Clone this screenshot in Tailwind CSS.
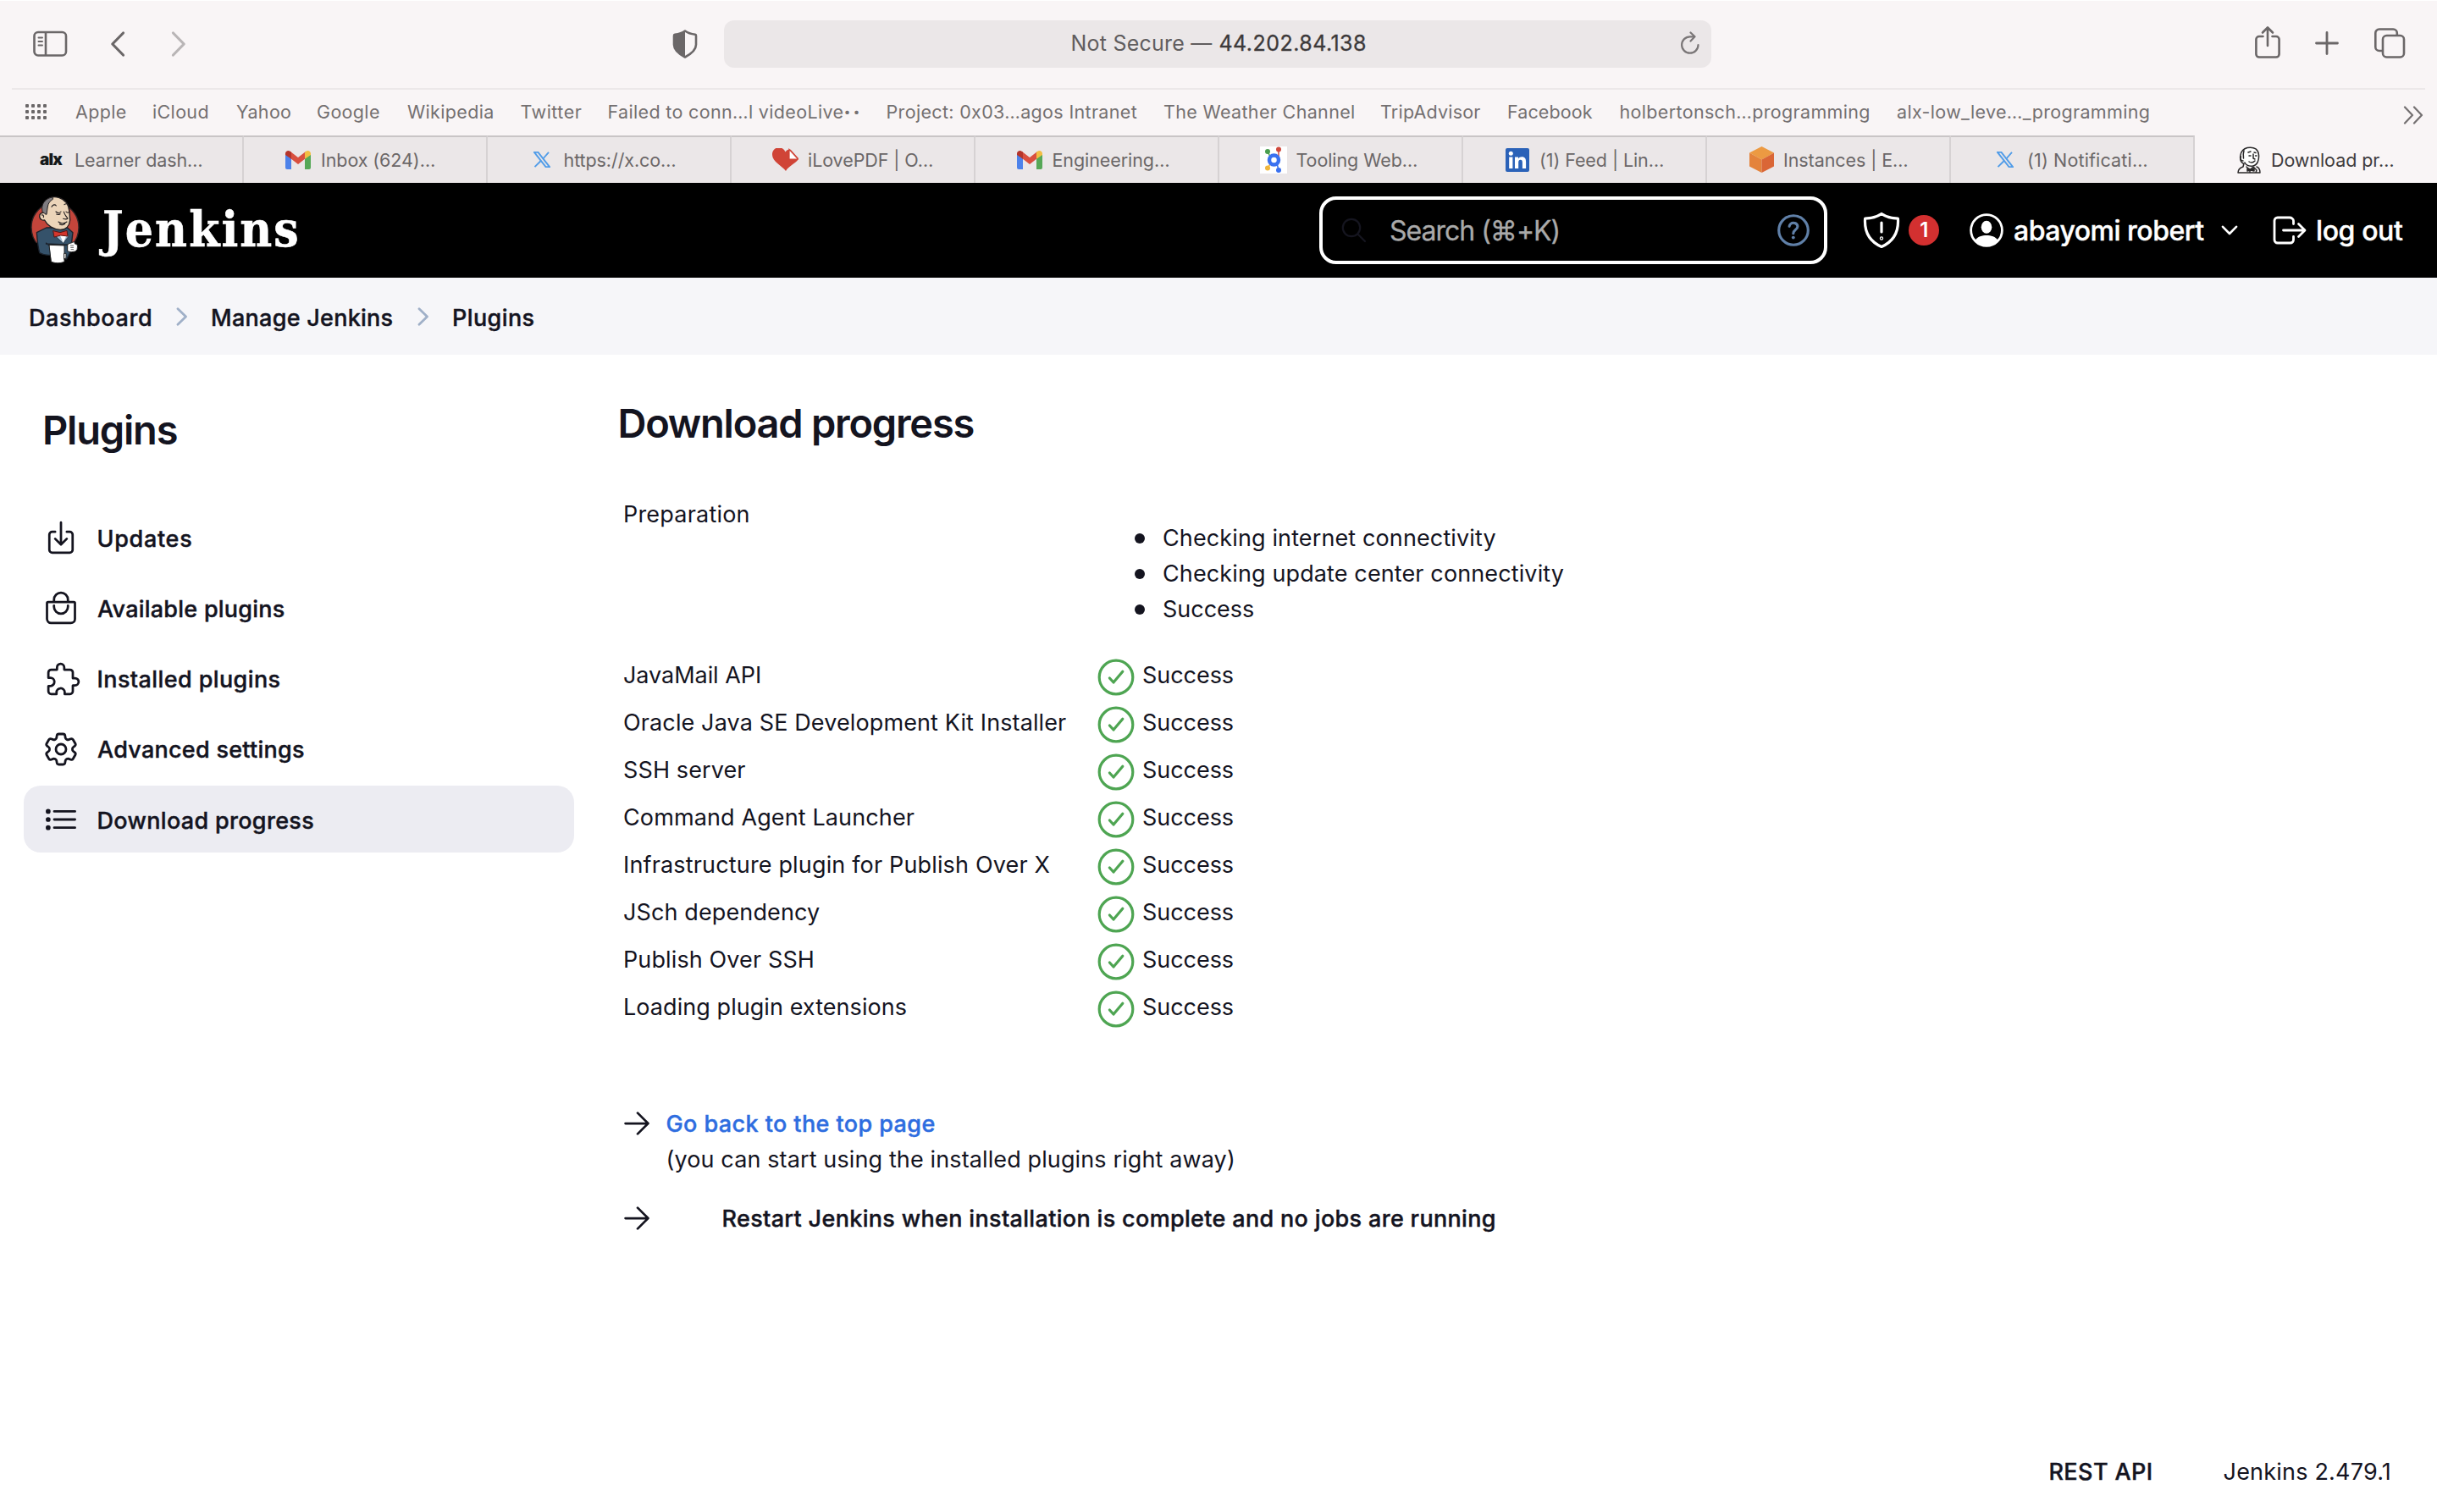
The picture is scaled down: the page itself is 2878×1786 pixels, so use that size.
<!DOCTYPE html>
<html lang="en">
<head>
<meta charset="utf-8">
<title>Download progress - Jenkins</title>
<script src="https://cdn.jsdelivr.net/npm/@tailwindcss/browser@4"></script>
</head>
<body class="w-[2878px] h-[1786px] overflow-hidden bg-white font-['Inter',sans-serif] text-[27px] leading-[42px] tracking-[0.12px] text-[#14141f] flex flex-col">

<svg class="hidden">
  <symbol id="ok" viewBox="-22 -22 44 44"><g fill="none" stroke="#4ea552" stroke-width="3.2" stroke-linecap="round" stroke-linejoin="round"><circle r="19.8"/><path d="M-7.6 1L-3 6 7.8-6.8"/></g></symbol>
  <symbol id="arrow" viewBox="0 0 512 512"><path fill="none" stroke="#14141f" stroke-width="32" stroke-linecap="round" stroke-linejoin="round" d="M268 112l144 144-144 144M392 256H100"/></symbol>
  <symbol id="gmail" viewBox="0 0 30 22"><path fill="#4d82ea" d="M0 4l7 5v13H2a2 2 0 0 1-2-2z"/><path fill="#56a857" d="M30 4l-7 5v13h5a2 2 0 0 0 2-2z"/><path fill="#d95040" d="M6 1l9 7 9-7v8l-9 7-9-7z"/><path fill="#b5352b" d="M0 3.500C0 .5 3.500-1 6 1l1 .8v8L0 5z"/><path fill="#f2be42" d="M30 3.500C30 .5 26.500-1 24 1l-1 .8v8L30 5z"/></symbol>
  <symbol id="x" viewBox="0 0 20 19"><g fill="none" stroke="#529de8" stroke-width="1.900"><path d="M1 .9h4.500L19 18.100h-4.500z"/><path d="M18 .8L11.300 8.500M8.700 11L1.500 18.200"/></g></symbol>
  <symbol id="crumb" viewBox="0 0 14 22"><path fill="none" stroke="#a0b0c8" stroke-width="2.800" stroke-linecap="round" stroke-linejoin="round" d="M2 1.800L11.500 11 2 20.200"/></symbol>
</svg>

<!-- Browser toolbar -->
<div class="h-[104px] shrink-0 bg-[#f9f5f6] border-t border-white flex items-center pb-[2px] text-[#6b6768]">
  <svg class="ml-[39px] w-[41px] h-[32px]" viewBox="0 0 41 32" fill="none" stroke="currentColor" stroke-width="2.600"><rect x="1.500" y="2" width="37.500" height="27.500" rx="4.500"/><path d="M15 2v27.500"/><path stroke-width="2" stroke-linecap="round" d="M6.500 8.500h4.500M6.500 13h4.500M6.500 17.500h4.500"/></svg>
  <svg class="ml-[49px] w-[20px] h-[32px]" viewBox="0 0 20 32" fill="none" stroke="currentColor" stroke-width="3.200" stroke-linecap="round" stroke-linejoin="round"><path d="M16.500 3L3.800 16l12.700 13"/></svg>
  <svg class="ml-[51px] w-[20px] h-[32px] text-[#b9b5b6]" viewBox="0 0 20 32" fill="none" stroke="currentColor" stroke-width="3.200" stroke-linecap="round" stroke-linejoin="round"><path d="M4.500 3L17.200 16 4.500 29"/></svg>
  <svg class="ml-[574px] w-[30px] h-[34px]" viewBox="0 0 30 34"><path fill="none" stroke="currentColor" stroke-width="2.600" stroke-linejoin="round" d="M15 1.500c3.500 2.600 7.500 3.700 12 4.300.8.100 1 .7 1 1.500v10.500c0 6.200-5 10.500-13 14.700-8-4.200-13-8.500-13-14.700V7.300c0-.8.200-1.400 1-1.500C7.500 5.200 11.500 4.100 15 1.500z"/><path fill="currentColor" d="M15 1.500c-3.500 2.600-7.500 3.700-12 4.300-.8.100-1 .7-1 1.500v10.500c0 6.200 5 10.500 13 14.700z"/></svg>
  <div class="ml-[31px] w-[1166px] h-[56px] mt-px rounded-[12px] bg-[#ebe7e8] flex items-center text-[25px] tracking-[0.22px]">
    <span class="ml-[409.500px] -mt-[2px] text-[#605d5e]">Not Secure —</span>
    <span class="ml-[8px] -mt-[2px] text-[#3c393a] tracking-[0.46px] [-webkit-text-stroke:0.300px_#3c393a]">44.202.84.138</span>
    <svg class="ml-auto mr-[13px] -mt-[2px] w-[24px] h-[28px]" viewBox="0 0 24 28" fill="none" stroke="#7a7677" stroke-width="2.200" stroke-linecap="round" stroke-linejoin="round"><path d="M21.500 16a9.700 9.700 0 1 1-9.700-9.700h4.700"/><path d="M12.500 1.500l5 4.800-5 5.200"/></svg>
  </div>
  <svg class="ml-[641px] -mt-[3px] w-[32px] h-[40px]" viewBox="0 0 32 40" fill="none" stroke="currentColor" stroke-width="2.600" stroke-linecap="round" stroke-linejoin="round"><path d="M10.500 13H6a3.600 3.600 0 0 0-3.600 3.600V34A3.600 3.600 0 0 0 6 37.500h20a3.600 3.600 0 0 0 3.600-3.500V16.600A3.600 3.600 0 0 0 26 13h-4.500M16 24V3M10 8.500L16 2.500l6 6"/></svg>
  <svg class="ml-[40px] -mt-px w-[28px] h-[28px]" viewBox="0 0 28 28" fill="none" stroke="currentColor" stroke-width="2.800" stroke-linecap="round"><path d="M14 1.500v25M1.500 14h25"/></svg>
  <svg class="ml-[41px] -mt-px w-[38px] h-[38px]" viewBox="0 0 38 38" fill="none" stroke="currentColor" stroke-width="2.600"><rect x="11" y="10" width="25" height="25.500" rx="4.500"/><path d="M10.500 28H6.800A4.500 4.500 0 0 1 2.300 23.500V7A4.500 4.500 0 0 1 6.800 2.500h16.500A4.500 4.500 0 0 1 27.800 7v2.500"/></svg>
</div>

<!-- Favourites bar -->
<div class="h-[56px] shrink-0 bg-[#f9f5f6] flex flex-col text-[#747071]">
  <div class="mx-[14px] h-[2px] bg-[#ece8e9]"></div>
  <div class="flex items-center h-[52px] text-[21.5px] tracking-[0.34px] whitespace-nowrap">
    <svg class="ml-[29px] w-[28px] h-[20px] mr-[32px]" viewBox="0 0 28 20" fill="#6b6768"><g id="dots"><rect x="1" y="1" width="4" height="4" rx="1"/><rect x="8" y="1" width="4" height="4" rx="1"/><rect x="15" y="1" width="4" height="4" rx="1"/><rect x="22" y="1" width="4" height="4" rx="1"/></g><use href="#dots" y="7"/><use href="#dots" y="14"/></svg>
    <span class="w-[91px] shrink-0">Apple</span>
    <span class="w-[99px] shrink-0">iCloud</span>
    <span class="w-[95px] shrink-0">Yahoo</span>
    <span class="w-[107px] shrink-0">Google</span>
    <span class="w-[133.500px] shrink-0">Wikipedia</span>
    <span class="w-[103px] shrink-0 tracking-[0.5px]">Twitter</span>
    <span class="w-[329px] shrink-0">Failed to conn…l videoLive<span class="font-black tracking-[3px]">··</span></span>
    <span class="w-[327.500px] shrink-0">Project: 0x03…agos Intranet</span>
    <span class="w-[256px] shrink-0">The Weather Channel</span>
    <span class="w-[150px] shrink-0 tracking-[0.2px]">TripAdvisor</span>
    <span class="w-[132.500px] shrink-0 tracking-[0.1px]">Facebook</span>
    <span class="w-[327.500px] shrink-0">holbertonsch…programming</span>
    <span>alx-low_leve…_programming</span>
    <svg class="ml-auto mr-[16px] mt-[8px] w-[24px] h-[22px]" viewBox="0 0 24 22" fill="none" stroke="currentColor" stroke-width="2.200" stroke-linecap="round" stroke-linejoin="round"><path d="M2 1.500L11 11l-9 9.500M13 1.500L22 11l-9 9.500"/></svg>
  </div>
</div>

<!-- Tabs -->
<div class="h-[56px] shrink-0 grid grid-cols-[repeat(9,288px)_286px] bg-[#ebe7e8] text-[21.5px] tracking-[-0.08px] text-[#6b6768] whitespace-nowrap *:flex *:items-center *:pb-px">
  <div class="border-t-2 border-r-2 border-t-[#c9c5c6] border-r-[#d6d2d3]"><span class="ml-[47px] w-[41px] font-black text-[19px] leading-none text-[#15191a] tracking-[-0.8px]">alx</span><span>Learner dash…</span></div>
  <div class="border-t-2 border-r-2 border-t-[#c9c5c6] border-r-[#d6d2d3]"><svg class="ml-[49px] w-[30px] h-[22px] mr-[12px]"><use href="#gmail"/></svg><span>Inbox (624)…</span></div>
  <div class="border-t-2 border-r-2 border-t-[#c9c5c6] border-r-[#d6d2d3]"><svg class="ml-[54px] w-[20px] h-[19px] mr-[15.500px]"><use href="#x"/></svg><span>https://x.co…</span></div>
  <div class="border-t-2 border-r-2 border-t-[#c9c5c6] border-r-[#d6d2d3]"><svg class="ml-[48px] w-[31px] h-[27px] mr-[11px]" viewBox="0 0 31 27"><path fill="#d04437" d="M16 27C12 21 0 16 0 8a8 8 0 0 1 15.500-3.500C17 2 20 1 22 2l9 10c0 4-12 9-15 15z"/><path fill="#fff" stroke="#d04437" stroke-width="1.200" d="M20 1.500V13h10.500z"/></svg><span>iLovePDF | O…</span></div>
  <div class="border-t-2 border-r-2 border-t-[#c9c5c6] border-r-[#d6d2d3]"><svg class="ml-[49px] w-[30px] h-[22px] mr-[11.500px]"><use href="#gmail"/></svg><span>Engineering…</span></div>
  <div class="border-t-2 border-r-2 border-t-[#c9c5c6] border-r-[#d6d2d3]"><svg class="ml-[48px] w-[32px] h-[32px] mr-[10.500px]" viewBox="0 0 32 32"><path fill="#fff" d="M0 0h32v32H0z"/><g stroke-width="1.500"><path stroke="#4a9e4f" d="M9 6l3 6"/><path stroke="#d0483c" d="M22 4v8"/><path stroke="#efb73e" d="M9 25l4-5"/><path stroke="#3a71f0" d="M22 28l-2-8"/></g><circle cx="16.500" cy="16" r="5.500" fill="none" stroke="#3a71f0" stroke-width="4.500"/><circle cx="9" cy="6" r="3" fill="#4a9e4f"/><circle cx="22" cy="3.500" r="3" fill="#d0483c"/><circle cx="9" cy="25.500" r="3" fill="#efb73e"/><circle cx="22" cy="28" r="3" fill="#3a71f0"/></svg><span>Tooling Web…</span></div>
  <div class="border-t-2 border-r-2 border-t-[#c9c5c6] border-r-[#d6d2d3]"><svg class="ml-[50px] w-[28px] h-[28px] mr-[12px]" viewBox="0 0 28 28"><rect width="28" height="28" rx="2" fill="#2b62b8"/><g fill="#fff"><circle cx="6.300" cy="6.300" r="2.500"/><path d="M4.200 10.500h4.200V24H4.200zM11 10.500h4v1.900c.8-1.400 2.400-2.200 4.200-2.200 3.900 0 4.900 2.500 4.900 6V24h-4.200v-6.900c0-1.700-.3-3.400-2.300-3.400s-2.400 1.600-2.400 3.300v7H11z"/></g></svg><span>(1) Feed | Lin…</span></div>
  <div class="border-t-2 border-r-2 border-t-[#c9c5c6] border-r-[#d6d2d3]"><svg class="ml-[50px] w-[29px] h-[31px] mr-[11px]" viewBox="0 0 29 31"><path fill="#ec9a42" d="M14.500 0L29 7.500 14.500 15.500 0 7.500z"/><path fill="#e4833b" d="M0 7.500l14.500 8V31L0 23.500z"/><path fill="#da6636" d="M29 7.500l-14.500 8V31L29 23.500z"/></svg><span>Instances | E…</span></div>
  <div class="border-t-2 border-r-2 border-t-[#c9c5c6] border-r-[#d6d2d3]"><svg class="ml-[54px] w-[20px] h-[19px] mr-[16px]"><use href="#x"/></svg><span class="tracking-[0.15px]">(1) Notificati…</span></div>
  <div class="bg-[#f9f5f6] border-t-2 border-[#f9f5f6] text-[#3f3c3d]"><svg class="ml-[49px] w-[30px] h-[32px] mr-[11px]" viewBox="0 0 30 32" fill="none" stroke="#2a2829" stroke-width="1.500" stroke-linecap="round" stroke-linejoin="round"><path fill="#fff" d="M8 20C3 17 3 4 13 1.500 22 0 26 4 26.500 10c.5 6-1.500 12-7 13-4 .5-8-1-9.500-4"/><path d="M9 5c-1 3-1 6-.5 9M5.500 12c-1.500 2 0 5 2.500 5M14 7l3-1M21 7l2 .5M20 9v5l2 1M15 11h2M22.500 11H24M15 18c3 2 5 1 7-1M9 20l-1 4c-3 1-6 3-6 7h26c0-3-1-6-4-7M12 24l4 4 4-4M16 28v3M20 24l4 4-1 3"/><path fill="#2a2829" d="M13 26l4 1 4-1v3l-4-1-4 1z"/></svg><span>Download pr…</span></div>
</div>

<!-- Jenkins header -->
<header class="h-[112px] shrink-0 bg-black text-white flex items-center text-[32px] tracking-[-0.55px]">
  <svg class="ml-[24px] w-[100px] h-[100px]" viewBox="0 0 300 300" stroke-linejoin="round" stroke-linecap="round">
    <ellipse cx="123" cy="140" rx="84" ry="88" fill="#c3453b" stroke="#2b2223" stroke-width="4"/>
    <path fill="#000" d="M40 196h30l34 70H50zM206 190l-46 60h60z"/>
    <path fill="#35526a" stroke="#1b222b" stroke-width="4" d="M92 141L58 158c2 28 4 50 10 72 10 6 24 9 38 8l58 14 14-26 8-68-20-18z"/>
    <path fill="#9bb8d0" stroke="#1b222b" stroke-width="2" d="M126 172l26 24 20-26-16-12z"/>
    <path fill="#fff" d="M140 166l12 28 12-26z"/>
    <path fill="#ecd5b9" stroke="#221e1f" stroke-width="4" d="M84 60c6-24 30-32 52-26 26 8 36 26 38 50l2 30c-2 20-14 34-34 34-24 0-46-14-56-34-8 2-16-2-18-12-1-8 6-15 14-14z"/>
    <path fill="#7f7c80" stroke="#221e1f" stroke-width="3" d="M112 33C92 36 78 52 77 70c0 8 1 14 2 18 4-1 7 0 8 4l6 2 4-28c2-12 8-20 18-26z"/>
    <path fill="none" stroke="#221e1f" stroke-width="3.400" d="M111 67c4-8 12-10 16-4M156 59c6-5 12-3 14 2M126 84c6 6 13 6 18 0M162 84c4 5 9 4 12 0M128 93c5 2 10 1 13-1M154 84c2 10 8 16 14 24-4 4-10 3-16 1M135 120c10 7 20 7 30 0M139 128c7 4 14 3 19-1M76 96c4-2 8 2 6 8"/>
    <path fill="#d3362d" stroke="#5c1512" stroke-width="3" d="M117 152l24 6 24-7 3 20-25-3-22 6z"/>
    <path fill="none" stroke="#1b222b" stroke-width="5" d="M92 198l80 4M92 196l12 8"/>
    <path fill="#fff" stroke="#222" stroke-width="3" d="M103 202l53 2v58c-16 6-34 5-46 0z"/>
    <path fill="#fff" stroke="#222" stroke-width="3" d="M168 200c4-5 14-4 18-8 6-2 8 2 7 6 8 0 11 6 9 14 1 8-6 14-14 14-8 2-14 1-20-2zM156 232h6v16l-6 4z"/>
    <path stroke="#444" stroke-width="2.500" fill="none" d="M178 204h10M179 211h9M180 218h8"/>
  </svg>
  <span class="ml-[-3px] w-[256px] font-['DejaVu_Serif_Condensed','DejaVu_Serif',serif] font-bold text-[58px] tracking-[2.100px] leading-none -mt-[2px] [-webkit-text-stroke:0.600px_white]">Jenkins</span>
  <div class="ml-[1181px] w-[600px] h-[80px] shrink-0 rounded-[20px] border-4 border-white flex items-center text-[#a9a9a9]">
    <svg class="ml-[22px] w-[30px] h-[30px]" viewBox="0 0 30 30" fill="none" stroke="#15151f" stroke-width="2.200" stroke-linecap="round"><circle cx="12" cy="12" r="10.200"/><path d="M19.500 19.500L28 28"/></svg>
    <span class="ml-[27px] mt-[2px] tracking-[-1px] [-webkit-text-stroke:0.300px_#a9a9a9]">Search (⌘+K)</span>
    <svg class="ml-auto mr-[11px] w-[50px] h-[50px]" viewBox="0 0 512 512" fill="none" stroke="#6080a8" stroke-width="32" stroke-linecap="round"><circle cx="256" cy="256" r="177"/><path d="M206 208s.8-16 17-30c10-8 22-11 32-11 11 0 20 2 25 4.500 9 4.500 26 15 26 38 0 24-15 34-31 46s-21 24-21 38"/><circle cx="254" cy="344" r="20" fill="#6080a8" stroke="none"/></svg>
  </div>
  <svg class="ml-[42px] w-[44px] h-[44px]" viewBox="0 0 44 44" fill="none" stroke="#fff" stroke-width="3.200" stroke-linecap="round" stroke-linejoin="round"><path d="M22 2.500C17 6 11 8 2.600 8.200 1.500 24 7.500 35 22 41.500 36.500 35 42.500 24 41.400 8.200 33 8 27 6 22 2.500z"/><path d="M22 13v11"/><circle cx="22" cy="31.500" r=".6"/></svg>
  <span class="ml-[10px] size-[36px] rounded-full bg-[#d33030] flex items-center justify-center text-[24px] font-semibold leading-none">1</span>
  <svg class="ml-[35px] w-[42px] h-[42px]" viewBox="-21 -21 42 42"><clipPath id="c"><circle r="18.500"/></clipPath><circle r="18.400" fill="none" stroke="#fff" stroke-width="2.800"/><ellipse cy="-3.700" rx="6.300" ry="7.500" fill="#fff"/><path clip-path="url(#c)" fill="#fff" d="M-13.500 12C-11 7.500-5 6 0 6s11 1.500 13.500 6L9 20H-9z"/></svg>
  <span class="ml-[11px] mt-[2px] w-[226px] shrink-0 font-medium tracking-[-0.5px] whitespace-nowrap [-webkit-text-stroke:0.400px_white]">abayomi robert</span>
  <svg class="ml-[19px] w-[20px] h-[12px]" viewBox="0 0 20 12" fill="none" stroke="#fff" stroke-width="2.600" stroke-linecap="round" stroke-linejoin="round"><path d="M2 1.800l8 8.200 8-8.200"/></svg>
  <svg class="ml-[37px] w-[48px] h-[48px]" viewBox="0 0 512 512" fill="none" stroke="#fff" stroke-width="30" stroke-linecap="round" stroke-linejoin="round"><path d="M304 336v40a40 40 0 01-40 40H104a40 40 0 01-40-40V136a40 40 0 0140-40h152c22.090 0 48 17.910 48 40v40M368 336l80-80-80-80M176 256h256"/></svg>
  <span class="ml-[7px] mt-[2px] font-medium tracking-[-0.4px] [-webkit-text-stroke:0.400px_white]">log out</span>
</header>

<!-- Breadcrumbs -->
<nav class="h-[91px] shrink-0 bg-[#f6f6f9] flex items-center pt-[4px] font-medium tracking-[0.4px] [-webkit-text-stroke:0.400px_#14141f]">
  <span class="ml-[34px] w-[173.500px] tracking-[0.6px]">Dashboard</span>
  <svg class="w-[14px] h-[22px] mb-[3px]"><use href="#crumb"/></svg>
  <span class="ml-[27.500px] w-[243.500px] tracking-[0.27px]">Manage Jenkins</span>
  <svg class="w-[14px] h-[22px] mb-[3px]"><use href="#crumb"/></svg>
  <span class="ml-[27.500px]">Plugins</span>
</nav>

<div class="flex grow">
  <!-- Side panel -->
  <aside class="ml-[28px] w-[650px] pt-[57px] font-medium tracking-[0.32px]">
    <h1 class="pl-[22px] text-[47px] leading-[64px] font-semibold tracking-[-1.200px]">Plugins</h1>
    <ul class="mt-[56px] flex flex-col gap-[4px] *:h-[79px] *:rounded-[20px] *:flex *:items-center *:pl-[22px] [-webkit-text-stroke:0.400px_#14141f]">
      <li><svg class="w-[44px] h-[44px] mr-[20.500px] -mt-px" viewBox="0 0 512 512" fill="none" stroke="currentColor" stroke-width="32" stroke-linecap="round" stroke-linejoin="round"><path d="M336 176h40a40 40 0 0140 40v208a40 40 0 01-40 40H136a40 40 0 01-40-40V216a40 40 0 0140-40h40M176 272l80 80 80-80M256 48v288"/></svg><span class="mt-[2px] tracking-[0.7px]">Updates</span></li>
      <li><svg class="w-[44px] h-[44px] mr-[21px] -mt-[2px]" viewBox="0 0 512 512" fill="none" stroke="currentColor" stroke-width="32" stroke-linecap="round" stroke-linejoin="round"><path d="M80 176a16 16 0 00-16 16v216c0 30.240 25.760 56 56 56h272c30.240 0 56-24.510 56-54.750V192a16 16 0 00-16-16zM160 176v-32a96 96 0 0196-96h0a96 96 0 0196 96v32M160 224v16a96 96 0 0096 96h0a96 96 0 0096-96v-16"/></svg><span class="mt-[2px] tracking-[0.24px]">Available plugins</span></li>
      <li><svg class="w-[44px] h-[44px] ml-[3px] mr-[17.500px]" viewBox="0 0 512 512" fill="none" stroke="currentColor" stroke-width="32" stroke-linecap="round" stroke-linejoin="round"><path d="M413.660 246.100H386a2 2 0 01-2-2v-77.240A38.860 38.860 0 00345.140 128H267.900a2 2 0 01-2-2V98.340c0-27.140-21.500-49.860-48.640-50.330a49.530 49.530 0 00-50.400 49.510V126a2 2 0 01-2 2H87.620A39.740 39.740 0 0048 167.620V238a2 2 0 002 2h26.910c29.370 0 53.680 25.480 54.090 54.850.42 29.870-23.510 57.150-53.290 57.150H50a2 2 0 00-2 2v70.380A39.740 39.740 0 0087.620 464H158a2 2 0 002-2v-20.930c0-30.280 24.750-56.350 55-57.060 30.100-.7 57 20.310 57 50.280V462a2 2 0 002 2h71.140A38.860 38.860 0 00384 425.140v-78a2 2 0 012-2h28.480c27.630 0 49.520-22.670 49.520-50.400s-23.200-48.640-50.340-48.640z"/></svg><span class="mt-[2px] tracking-[0.4px]">Installed plugins</span></li>
      <li><svg class="w-[48px] h-[48px] -ml-[2px] mr-[19px]" viewBox="0 0 24 24" fill="none" stroke="currentColor" stroke-width="1.400" stroke-linecap="round" stroke-linejoin="round"><path d="M9.594 3.940c.09-.542.56-.94 1.110-.94h2.593c.55 0 1.020.398 1.110.94l.213 1.281c.063.374.313.686.645.87.074.04.147.083.22.127.325.196.72.257 1.075.124l1.217-.456a1.125 1.125 0 0 1 1.370.49l1.296 2.247a1.125 1.125 0 0 1-.26 1.431l-1.003.827c-.293.241-.438.613-.43.992a7.723 7.723 0 0 1 0 .255c-.008.378.137.75.43.991l1.004.827c.424.35.534.955.26 1.430l-1.298 2.247a1.125 1.125 0 0 1-1.369.491l-1.217-.456c-.355-.133-.75-.072-1.076.124a6.470 6.470 0 0 1-.22.128c-.331.183-.581.495-.644.869l-.213 1.281c-.09.543-.56.94-1.110.94h-2.594c-.55 0-1.019-.398-1.110-.94l-.213-1.281c-.062-.374-.312-.686-.644-.87a6.520 6.520 0 0 1-.22-.127c-.325-.196-.72-.257-1.076-.124l-1.217.456a1.125 1.125 0 0 1-1.369-.49l-1.297-2.247a1.125 1.125 0 0 1 .26-1.431l1.004-.827c.292-.24.437-.613.43-.991a6.932 6.932 0 0 1 0-.255c.007-.38-.138-.751-.43-.992l-1.004-.827a1.125 1.125 0 0 1-.26-1.430l1.297-2.247a1.125 1.125 0 0 1 1.370-.491l1.216.456c.356.133.751.072 1.076-.124.072-.044.146-.086.22-.128.332-.183.582-.495.644-.869l.214-1.280Z"/><circle cx="12" cy="12" r="3"/></svg><span class="mt-[2px] tracking-[0.26px]">Advanced settings</span></li>
      <li class="bg-[#ececf2]"><svg class="w-[44px] h-[44px] mr-[20.500px]" viewBox="0 0 512 512" fill="none" stroke="currentColor" stroke-width="34" stroke-linecap="round"><path d="M164 144h284M164 256h284M164 368h284"/><g fill="currentColor"><circle cx="80" cy="144" r="16"/><circle cx="80" cy="256" r="16"/><circle cx="80" cy="368" r="16"/></g></svg><span class="mt-[4px]">Download progress</span></li>
    </ul>
  </aside>

  <!-- Main panel -->
  <main class="ml-[51.500px] w-[2148.500px] flex flex-col pt-[49px]">
    <h1 class="text-[47px] leading-[64px] font-semibold tracking-[-1.240px]">Download progress</h1>
    <div class="mt-[55px] ml-[6.500px] grid grid-cols-[560px_1fr]">
      <div class="h-[183px] tracking-[0.2px]">Preparation</div>
      <ul class="pt-[28px] *:flex *:items-center *:gap-[21px] pl-[44px]">
        <li><i class="size-[12px] rounded-full bg-[#14141f]"></i>Checking internet connectivity</li>
        <li><i class="size-[12px] rounded-full bg-[#14141f]"></i>Checking update center connectivity</li>
        <li><i class="size-[12px] rounded-full bg-[#14141f]"></i><span class="tracking-[-0.02px]">Success</span></li>
      </ul>
    </div>
    <div class="ml-[6.500px] grid grid-cols-[560px_1fr] auto-rows-[56px] items-center">
      <span class="tracking-[-0.05px]">JavaMail API</span><span class="flex items-center tracking-[-0.05px]"><svg class="w-[44px] h-[44px] mt-[4px] mr-[9px]"><use href="#ok"/></svg>Success</span>
      <span>Oracle Java SE Development Kit Installer</span><span class="flex items-center tracking-[-0.05px]"><svg class="w-[44px] h-[44px] mt-[4px] mr-[9px]"><use href="#ok"/></svg>Success</span>
      <span>SSH server</span><span class="flex items-center tracking-[-0.05px]"><svg class="w-[44px] h-[44px] mt-[4px] mr-[9px]"><use href="#ok"/></svg>Success</span>
      <span>Command Agent Launcher</span><span class="flex items-center tracking-[-0.05px]"><svg class="w-[44px] h-[44px] mt-[4px] mr-[9px]"><use href="#ok"/></svg>Success</span>
      <span class="tracking-[0.16px]">Infrastructure plugin for Publish Over X</span><span class="flex items-center tracking-[-0.05px]"><svg class="w-[44px] h-[44px] mt-[4px] mr-[9px]"><use href="#ok"/></svg>Success</span>
      <span>JSch dependency</span><span class="flex items-center tracking-[-0.05px]"><svg class="w-[44px] h-[44px] mt-[4px] mr-[9px]"><use href="#ok"/></svg>Success</span>
      <span>Publish Over SSH</span><span class="flex items-center tracking-[-0.05px]"><svg class="w-[44px] h-[44px] mt-[4px] mr-[9px]"><use href="#ok"/></svg>Success</span>
      <span class="tracking-[0.06px]">Loading plugin extensions</span><span class="flex items-center tracking-[-0.05px]"><svg class="w-[44px] h-[44px] mt-[4px] mr-[9px]"><use href="#ok"/></svg>Success</span>
    </div>
    <div class="mt-[89px] ml-[0.500px] flex h-[42px] items-center"><svg class="w-[44px] h-[44px] -mt-[2px]"><use href="#arrow"/></svg><a class="ml-[12.500px] font-medium tracking-[0.41px] text-[#2e6de0] [-webkit-text-stroke:0.400px_#2e6de0]">Go back to the top page</a></div>
    <p class="ml-[57px]">(you can start using the installed plugins right away)</p>
    <div class="mt-[28px] ml-[0.500px] flex h-[42px] items-center"><svg class="w-[44px] h-[44px] -mt-[2px]"><use href="#arrow"/></svg><span class="ml-[78.500px] font-medium tracking-[0.33px] [-webkit-text-stroke:0.400px_#14141f]">Restart Jenkins when installation is complete and no jobs are running</span></div>
    <footer class="mt-auto mb-[26px] mr-[54px] flex justify-end gap-[83px]"><span class="font-medium tracking-[0.4px] [-webkit-text-stroke:0.400px_#14141f]">REST API</span><span class="tracking-[0.2px]">Jenkins 2.479.1</span></footer>
  </main>
</div>
</body>
</html>
